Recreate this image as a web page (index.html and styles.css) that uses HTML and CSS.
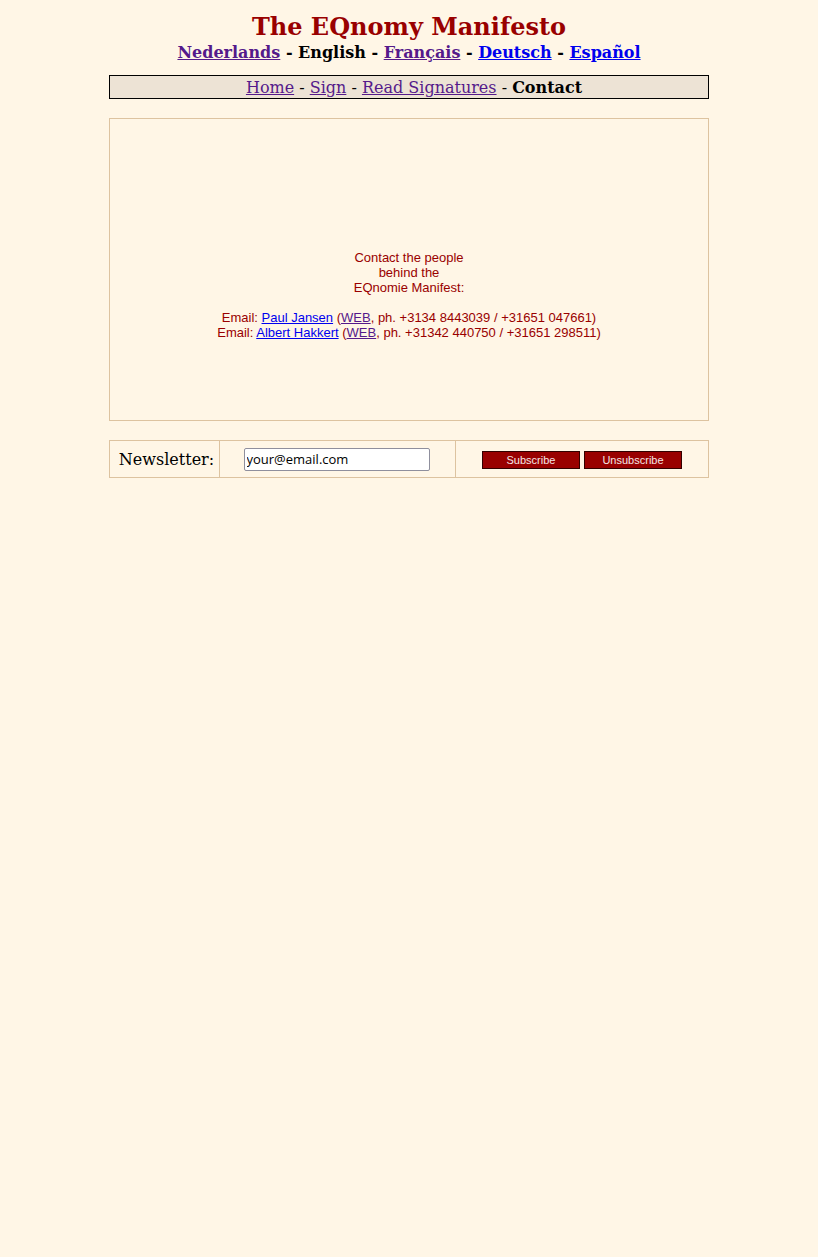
FILE: index.html
```html
<!DOCTYPE html>
<html>
<head>
<meta charset="utf-8">
<title>The EQnomy Manifesto</title>
<link rel="stylesheet" href="styles.css">
</head>
<body>
<div class="page">
  <header class="head">
    <h1 class="title">The EQnomy Manifesto</h1>
    <div class="langs">
      <a href="#" class="visited">Nederlands</a> - English - <a href="#" class="visited">Français</a> - <a href="#">Deutsch</a> - <a href="#">Español</a>
    </div>
  </header>
  <nav class="nav">
    <a href="#" class="visited">Home</a> - <a href="#" class="visited">Sign</a> - <a href="#" class="visited">Read Signatures</a> - <b>Contact</b>
  </nav>
  <main class="content">
    <div class="contact">
      Contact the people<br>behind the<br>EQnomie Manifest:<br><br>
      Email: <a href="#">Paul Jansen</a> (<a href="#" class="visited">WEB</a>, ph. +3134 8443039 / +31651 047661)<br>
      Email: <a href="#">Albert Hakkert</a> (<a href="#" class="visited">WEB</a>, ph. +31342 440750 / +31651 298511)
    </div>
  </main>
  <table class="news">
    <tr>
      <td class="news-label">Newsletter:</td>
      <td class="news-input"><input type="text" value="your@email.com" class="email"></td>
      <td class="news-buttons"><button class="btn">Subscribe</button><button class="btn">Unsubscribe</button></td>
    </tr>
  </table>
</div>
</body>
</html>
```

FILE: styles.css
```css
html, body {
  margin: 0;
  padding: 0;
  background: #fff6e6;
}
body {
  font-family: "DejaVu Serif", serif;
  color: #000;
}
.page {
  width: 600px;
  margin: 0 auto;
  padding-top: 11px;
}
.head {
  text-align: center;
}
.title {
  margin: 0;
  font-size: 24px;
  line-height: 32px;
  color: #990000;
  font-weight: bold;
}
.langs {
  font-size: 16px;
  line-height: 20px;
  font-weight: bold;
}
a {
  color: #0000ee;
}
a.visited {
  color: #551a8b;
}
.nav {
  margin-top: 12px;
  border: 1px solid #000;
  background: #ede3d5;
  text-align: center;
  font-size: 16px;
  line-height: 21px;
  padding: 1px 0 0 10px;
}
.content {
  margin-top: 19px;
  height: 301px;
  border: 1px solid #ddc3a0;
  display: flex;
  align-items: center;
  justify-content: center;
}
.contact {
  font-family: "Liberation Sans", Arial, sans-serif;
  font-size: 13px;
  line-height: 15px;
  color: #990000;
  text-align: center;
  margin-top: 50px;
}
.news {
  margin-top: 19px;
  width: 600px;
  border-collapse: collapse;
  border: 1px solid #ddc3a0;
}
.news td {
  border: 1px solid #ddc3a0;
  height: 36px;
  padding: 0;
}
.news-label {
  width: 105px;
  text-align: center;
  font-size: 16px;
  padding-left: 4px !important;
}
.news-input {
  width: 235px;
  text-align: center;
}
.email {
  width: 186px;
  height: 23px;
  box-sizing: border-box;
  font-family: "Open Sans", sans-serif;
  font-size: 13px;
  padding: 1px 2px;
  border: 1px solid #8f8f9d;
  border-radius: 2px;
  background: #fff;
  vertical-align: middle;
  margin-left: -2px;
}
.news-buttons {
  text-align: center;
}
.btn {
  width: 98px;
  height: 18px;
  margin: 0 2px;
  padding: 0;
  background: #990000;
  color: #f4e6e6;
  border: 1px solid #330000;
  font-family: "Liberation Sans", Arial, sans-serif;
  font-size: 11px;
  vertical-align: middle;
}
```
